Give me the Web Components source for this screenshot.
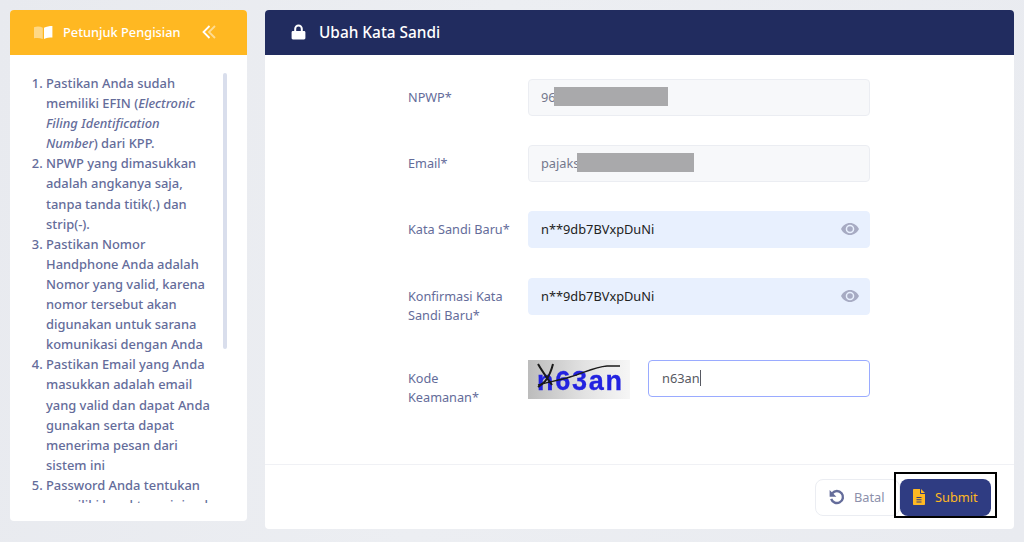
<!DOCTYPE html>
<html lang="id">
<head>
<meta charset="utf-8">
<title>Ubah Kata Sandi</title>
<style>
html, body { height: 100%; }
body {
  margin: 0;
  height: 542px;
  overflow: hidden;
  font-family: "Noto Sans", sans-serif;
  background: linear-gradient(100deg, #e8eaef 0%, #eceef2 45%, #e9ebf0 100%);
}
</style>
</head>
<body>
<app-page>
  <guide-panel slot="side" title="Petunjuk Pengisian">
    <ol>
      <li>Pastikan Anda sudah memiliki EFIN (<i>Electronic Filing Identification Number</i>) dari KPP.</li>
      <li>NPWP yang dimasukkan adalah angkanya saja, tanpa tanda titik(.) dan strip(-).</li>
      <li>Pastikan Nomor Handphone Anda adalah Nomor yang valid, karena nomor tersebut akan digunakan untuk sarana komunikasi dengan Anda</li>
      <li>Pastikan Email yang Anda masukkan adalah email yang valid dan dapat Anda gunakan serta dapat menerima pesan dari sistem ini</li>
      <li>Password Anda tentukan memiliki karakter minimal</li>
    </ol>
  </guide-panel>
  <password-card slot="main"></password-card>
</app-page>

<script>
const ICONS = {
  lock: '<svg width="15" height="16" viewBox="0 0 15 16"><path fill="#fff" d="M3.2 7V4.8a4.3 4.3 0 0 1 8.6 0V7h1.2c.9 0 1.4.6 1.4 1.4v5.7c0 .9-.6 1.4-1.4 1.4H2c-.9 0-1.4-.6-1.4-1.4V8.400c0-.8.5-1.4 1.400-1.400zm2-.1h4.600V4.800a2.300 2.300 0 0 0-4.600 0z"/></svg>',
  book: '<svg width="19" height="13" viewBox="0 0 19 13"><path fill="#fff" opacity=".45" d="M0 1.200c3-.9 6-.9 8.800.5V13C6 11.800 3 11.700 0 12.200z"/><path fill="#fff" d="M10 1.700c2.400-1.200 5.300-1.700 8.400-1.700v11.600c-3.100.1-6 .4-8.400 1.400z"/></svg>',
  chevrons: '<svg width="14" height="14" viewBox="0 0 14 14"><path fill="none" stroke="#fff" stroke-width="1.800" d="M7.500 1 1.500 7l6 6"/><path fill="none" stroke="#fff" stroke-width="1.800" opacity=".5" d="M13 1 7 7l6 6"/></svg>',
  eye: '<svg width="18" height="12" viewBox="0 0 18 12"><path fill="#a7abc3" fill-rule="evenodd" d="M9 0c3.900 0 7.200 2.500 9 6-1.800 3.500-5.100 6-9 6S1.800 9.500 0 6c1.800-3.500 5.100-6 9-6zm0 1.700a4.300 4.300 0 1 0 0 8.600 4.300 4.300 0 0 0 0-8.600z"/><circle cx="9" cy="6" r="2.800" fill="#a7abc3"/></svg>',
  undo: '<svg width="16" height="16" viewBox="0 0 16 16"><path fill="none" stroke="#646c9a" stroke-width="2.400" d="M3.300 4.200A6 6 0 1 1 2.200 9.800"/><path fill="#646c9a" d="M.6 1v6.800h6.800z"/></svg>',
  file: '<svg width="12" height="16" viewBox="0 0 12 16"><path fill="#ffb822" fill-rule="evenodd" d="M1 0h6v4.200c0 .5.300.8.800.8H12v10c0 .6-.4 1-1 1H1c-.6 0-1-.4-1-1V1c0-.6.4-1 1-1zm2.500 8v1h5V8zm0 2.200v1h5v-1zm0 2.200v1h5v-1z"/><path fill="#ffb822" d="M8 0l4 4H8z"/></svg>'
}

class AppPage extends HTMLElement {
  constructor() {
    super()
    this.attachShadow({ mode: 'open' }).innerHTML = `
      <style>
        :host { display: block; }
        #wrap {
          display: grid;
          grid-template-columns: 237px 749px;
          column-gap: 18px;
          padding: 10px 10px 0;
          align-items: start;
        }
      </style>
      <div id="wrap">
        <slot name="side"></slot>
        <slot name="main"></slot>
      </div>`
  }
}

class GuidePanel extends HTMLElement {
  constructor() {
    super()
    this.attachShadow({ mode: 'open' }).innerHTML = `
      <style>
        :host {
          display: block;
          width: 237px;
          height: 511px;
          background: #fff;
          border-radius: 4px;
          overflow: hidden;
        }
        header {
          box-sizing: border-box;
          height: 45px;
          background: #ffb822;
          display: flex;
          align-items: center;
          padding: 0 0 1px 24px;
          color: #fff;
          font-size: 12.8px;
          font-weight: 500;
        }
        header span { margin-left: 10px; width: 139px; white-space: nowrap; }
        header svg { display: block; }
        #body {
          position: relative;
          height: 430px;
          margin-top: 18px;
          overflow: hidden;
        }
        #thumb {
          position: absolute;
          left: 213px;
          top: 0;
          width: 4px;
          height: 276px;
          background: #d9deec;
          border-radius: 2px;
        }
        ::slotted(ol) {
          margin: 0;
          padding: 0 35px 0 36px;
          color: #646c9a;
          font-size: 12.9px;
          font-weight: 500;
          line-height: 20.1px;
        }
      </style>
      <header>${ICONS.book}<span>${this.getAttribute('title')}</span>${ICONS.chevrons}</header>
      <div id="body"><slot></slot><div id="thumb"></div></div>`
  }
}

class FormRow extends HTMLElement {
  constructor() {
    super()
    this.attachShadow({ mode: 'open' }).innerHTML = `
      <style>
        :host {
          display: grid;
          grid-template-columns: 120px 342px;
          align-items: start;
          margin-left: 143px;
        }
        label {
          width: 104px;
          color: #646c9a;
          font-size: 12.7px;
          line-height: 19px;
          padding-top: 9px;
        }
      </style>
      <label>${this.getAttribute('label')}</label>
      <slot></slot>`
  }
}

class TextField extends HTMLElement {
  constructor() {
    super()
    const kind = this.getAttribute('kind') || 'plain'
    const eye = this.hasAttribute('eye') ? `<span id="eye">${ICONS.eye}</span>` : ''
    const mask = this.getAttribute('mask')
    this.attachShadow({ mode: 'open' }).innerHTML = `
      <style>
        :host {
          display: block;
          position: relative;
          box-sizing: border-box;
          height: 37px;
          border-radius: 4px;
          font-size: 12.8px;
        }
        #box {
          box-sizing: border-box;
          height: 100%;
          display: flex;
          align-items: center;
          padding: 0 12px 2px;
          border-radius: 4px;
          border: 1px solid #ebedf2;
          color: #575962;
        }
        #box.readonly { background: #f7f8fa; color: #74788d; }
        #box.filled { background: #e8f0fe; border-color: #e8f0fe; color: #222; }
        #box.focus { background: #fff; border-color: #9aabff; color: #575962; padding-left: 13px; }
        #caret { width: 1px; height: 16px; background: #575962; }
        #eye { margin-left: auto; margin-right: -2px; display: flex; }
        #mask { position: absolute; top: 8px; height: 19px; background: #a9a9ab; }
      </style>
      <div id="box" class="${kind}">${this.getAttribute('value')}${kind === 'focus' ? '<span id="caret"></span>' : ''}${eye}</div>
      ${mask ? `<div id="mask" style="left:${mask.split(',')[0]}px;width:${mask.split(',')[1]}px"></div>` : ''}`
  }
}

class CaptchaImage extends HTMLElement {
  constructor() {
    super()
    this.attachShadow({ mode: 'open' }).innerHTML = `
      <style>
        :host { display: block; width: 102px; height: 39px; }
        svg { display: block; }
        text {
          font-family: "Liberation Sans", sans-serif;
          font-weight: 700;
          font-size: 27px;
          fill: #2222e0;
          stroke: #2222e0;
          stroke-width: .3px;
        }
      </style>
      <svg width="102" height="39" viewBox="0 0 102 39">
        <defs>
          <linearGradient id="g" x1="0" x2="1" y1="0" y2="0">
            <stop offset="0" stop-color="#bcbcbc"/><stop offset=".55" stop-color="#e2e2e2"/><stop offset="1" stop-color="#f6f6f6"/>
          </linearGradient>
          <filter id="b"><feGaussianBlur stdDeviation=".6"/></filter>
        </defs>
        <rect width="102" height="39" fill="url(#g)"/>
        <g filter="url(#b)">
          <text x="9" y="30" textLength="85" lengthAdjust="spacing">n63an</text>
          <path fill="none" stroke="#1a1a1a" stroke-width="2" d="M10 4c4 7 9 14 14 21M25 4c-2 8-4 12-7 16-2 3-5 5-8 7"/>
          <path fill="none" stroke="#1a1a1a" stroke-width="1.400" d="M10 25c11-3 22-5 32-8 14-4 24-10 37-11h13"/>
        </g>
      </svg>`
  }
}

class ActionButton extends HTMLElement {
  constructor() {
    super()
    this.attachShadow({ mode: 'open' }).innerHTML = `
      <style>
        :host {
          display: inline-flex;
          align-items: center;
          box-sizing: border-box;
          height: 37px;
          padding-bottom: 1px;
          border-radius: 8px;
          font-size: 12.8px;
          white-space: nowrap;
        }
        :host([variant="ghost"]) {
          width: 85px;
          padding-left: 13px;
          gap: 9px;
          border: 1px solid #ebedf2;
          color: #8c90ab;
          background: #fff;
        }
        :host([variant="primary"]) {
          width: 91px;
          padding-left: 13px;
          gap: 10px;
          background: #2f3c82;
          color: #ffb822;
        }
        svg { display: block; }
      </style>
      ${ICONS[this.getAttribute('icon')]}<slot></slot>`
  }
}

class PasswordCard extends HTMLElement {
  constructor() {
    super()
    this.attachShadow({ mode: 'open' }).innerHTML = `
      <style>
        :host {
          display: block;
          width: 749px;
          height: 519px;
          background: #fff;
          border-radius: 4px;
          overflow: hidden;
        }
        header {
          box-sizing: border-box;
          height: 45px;
          background: #212c5f;
          color: #fff;
          display: flex;
          align-items: center;
          gap: 13px;
          padding: 0 0 1px 26px;
          font-size: 15.4px;
          font-weight: 500;
        }
        header svg { display: block; }
        form { display: flex; flex-direction: column; padding-top: 24px; height: 409px; box-sizing: border-box; }
        form-row + form-row { margin-top: 29px; }
        form-row.pitch-long { margin-top: 30px; }
        form-row.after-wrap { margin-top: 35px; }
        #captcha { display: flex; gap: 18px; align-items: flex-start; }
        #captcha text-field { width: 222px; }
        footer {
          border-top: 1px solid #f0f1f5;
          height: 65px;
          display: flex;
          justify-content: flex-end;
          align-items: flex-start;
          padding: 14px 23px 0 0;
          box-sizing: border-box;
        }
        #btns { position: relative; display: flex; }
        #ring {
          position: absolute;
          left: 79px;
          top: -7px;
          width: 103px;
          height: 46px;
          box-sizing: border-box;
          border: 2px solid #000;
        }
        #submit-wrap { position: relative; z-index: 1; }
      </style>
      <header>${ICONS.lock}<span>Ubah Kata Sandi</span></header>
      <form>
        <form-row label="NPWP*"><text-field kind="readonly" value="96" mask="26,114"></text-field></form-row>
        <form-row label="Email*"><text-field kind="readonly" value="pajaks" mask="49,117"></text-field></form-row>
        <form-row label="Kata Sandi Baru*"><text-field kind="filled" value="n**9db7BVxpDuNi" eye></text-field></form-row>
        <form-row class="pitch-long" label="Konfirmasi Kata Sandi Baru*"><text-field kind="filled" value="n**9db7BVxpDuNi" eye></text-field></form-row>
        <form-row class="after-wrap" label="Kode Keamanan*">
          <div id="captcha"><captcha-image></captcha-image><text-field kind="focus" value="n63an"></text-field></div>
        </form-row>
      </form>
      <footer>
        <div id="btns">
          <action-button variant="ghost" icon="undo">Batal</action-button>
          <div id="ring"></div>
          <div id="submit-wrap"><action-button variant="primary" icon="file">Submit</action-button></div>
        </div>
      </footer>`
  }
}

customElements.define('app-page', AppPage)
customElements.define('guide-panel', GuidePanel)
customElements.define('form-row', FormRow)
customElements.define('text-field', TextField)
customElements.define('captcha-image', CaptchaImage)
customElements.define('action-button', ActionButton)
customElements.define('password-card', PasswordCard)
</script>
</body>
</html>
